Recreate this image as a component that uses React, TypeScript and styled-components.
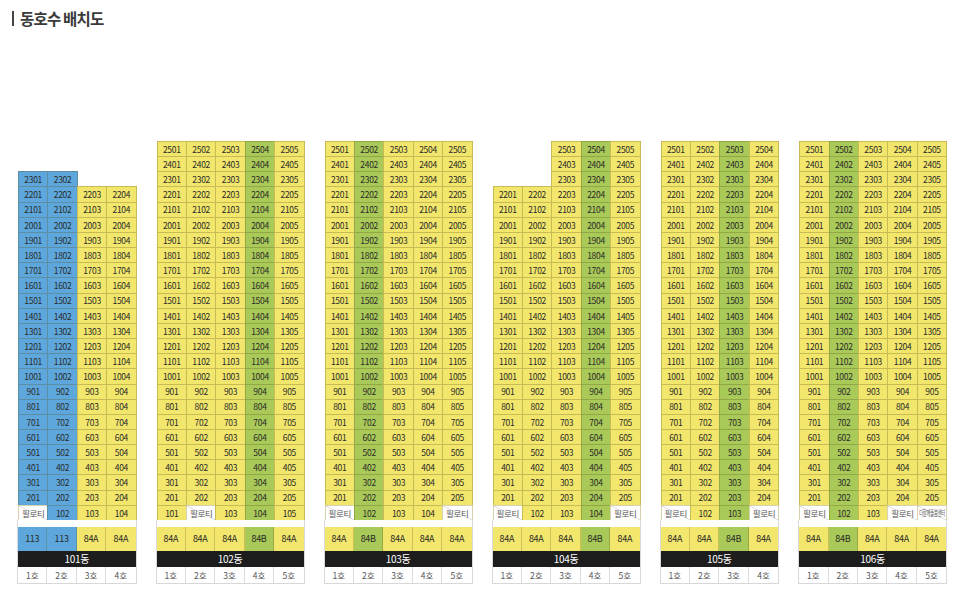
import styled, { createGlobalStyle } from "styled-components";

type Tone = "yellow" | "green" | "blue" | "white";

interface BuildingData {
  name: string;
  colTop: number[];
  tones: Tone[];
  ground: (string | null)[];
  types: string[];
}

const COL_W = 29.4;
const ROW_H = 15.16;

const TONE_BG: Record<Tone, string> = {
  yellow: "#f2e66c",
  green: "#a9c958",
  blue: "#5ea7dc",
  white: "#ffffff",
};

const BUILDINGS: BuildingData[] = [
  {
    name: "101동",
    colTop: [23, 23, 22, 22],
    tones: ["blue", "blue", "yellow", "yellow"],
    ground: ["필로티", null, null, null],
    types: ["113", "113", "84A", "84A"],
  },
  {
    name: "102동",
    colTop: [25, 25, 25, 25, 25],
    tones: ["yellow", "yellow", "yellow", "green", "yellow"],
    ground: [null, "필로티", null, null, null],
    types: ["84A", "84A", "84A", "84B", "84A"],
  },
  {
    name: "103동",
    colTop: [25, 25, 25, 25, 25],
    tones: ["yellow", "green", "yellow", "yellow", "yellow"],
    ground: ["필로티", null, null, null, "필로티"],
    types: ["84A", "84B", "84A", "84A", "84A"],
  },
  {
    name: "104동",
    colTop: [22, 22, 25, 25, 25],
    tones: ["yellow", "yellow", "yellow", "green", "yellow"],
    ground: ["필로티", null, null, null, "필로티"],
    types: ["84A", "84A", "84A", "84B", "84A"],
  },
  {
    name: "105동",
    colTop: [25, 25, 25, 25],
    tones: ["yellow", "yellow", "green", "yellow"],
    ground: ["필로티", null, null, "필로티"],
    types: ["84A", "84A", "84B", "84A"],
  },
  {
    name: "106동",
    colTop: [25, 25, 25, 25, 25],
    tones: ["yellow", "green", "yellow", "yellow", "yellow"],
    ground: ["필로티", null, null, "필로티", "다함께돌봄센터"],
    types: ["84A", "84B", "84A", "84A", "84A"],
  },
];

const GlobalStyle = createGlobalStyle`
  * { box-sizing: border-box; }
  body {
    margin: 0;
    background: #ffffff;
    font-family: "Noto Sans CJK KR", "Noto Sans", sans-serif;
    color: #333;
  }
`;

const Page = styled.div`
  width: 963px;
  height: 592px;
  padding: 8px 0 0 12px;
  overflow: hidden;
`;

const Title = styled.h2`
  display: flex;
  align-items: center;
  gap: 6px;
  margin: 0;
  height: 20px;
  font-size: 15.5px;
  font-weight: 700;
  letter-spacing: -0.8px;
  color: #3a3a3a;

  &::before {
    content: "";
    display: block;
    width: 2px;
    height: 15px;
    background: #444;
  }
`;

const BuildingsRow = styled.div`
  display: flex;
  align-items: flex-end;
  gap: 21px;
  margin-top: 113px;
  padding-left: 6px;
`;

const Building = styled.div<{ $cols: number }>`
  display: flex;
  flex-direction: column;
  width: ${({ $cols }) => $cols * COL_W}px;
`;

const FloorGrid = styled.div<{ $cols: number; $rows: number }>`
  display: grid;
  grid-template-columns: repeat(${({ $cols }) => $cols}, ${COL_W}px);
  grid-template-rows: repeat(${({ $rows }) => $rows}, ${ROW_H}px);
`;

const Cell = styled.div<{ $tone: Tone; $pilotis?: boolean }>`
  display: flex;
  align-items: center;
  justify-content: center;
  margin: 0 -1px -1px 0;
  border: 1px solid rgba(90, 80, 20, 0.28);
  background: ${({ $tone, $pilotis }) =>
    $pilotis
      ? `linear-gradient(to top right, transparent calc(50% - 0.6px), #cfcfcf 50%, transparent calc(50% + 0.6px)), #ffffff`
      : TONE_BG[$tone]};
  border-color: ${({ $pilotis }) =>
    $pilotis ? "#d6d2b0" : "rgba(90, 80, 20, 0.28)"};
  font-size: 8.5px;
  line-height: 1;
  letter-spacing: -0.3px;
  color: ${({ $pilotis }) => ($pilotis ? "#555" : "#2b2b2b")};
  white-space: nowrap;
  overflow: hidden;
`;

const Empty = styled.div``;

const Tiny = styled.span`
  display: inline-block;
  font-size: 7.5px;
  letter-spacing: -0.3px;
  transform: scaleX(0.56);
`;

const Footer = styled.div`
  display: flex;
  flex-direction: column;
  margin: 0 -1px;
  border: 1px solid #d8d8d8;
  border-top: none;
  background: #ffffff;
`;

const Spacer = styled.div`
  height: 7px;
`;

const FooterRow = styled.div<{ $cols: number }>`
  display: grid;
  grid-template-columns: repeat(${({ $cols }) => $cols}, 1fr);
`;

const TypeCell = styled.div<{ $tone: Tone }>`
  display: flex;
  align-items: center;
  justify-content: center;
  height: 24px;
  background: ${({ $tone }) => TONE_BG[$tone]};
  border-right: 1px solid rgba(90, 80, 20, 0.25);
  font-size: 9px;
  letter-spacing: -0.3px;
  color: #2b2b2b;

  &:last-child {
    border-right: none;
  }
`;

const NameBar = styled.div`
  display: flex;
  align-items: center;
  justify-content: center;
  height: 16px;
  background: #1d1d1d;
  color: #ffffff;
  font-size: 10px;
  letter-spacing: -0.3px;
`;

const LineCell = styled.div`
  display: flex;
  align-items: center;
  justify-content: center;
  height: 16px;
  border-right: 1px solid #dcdcdc;
  font-size: 8.5px;
  color: #555;

  &:last-child {
    border-right: none;
  }
`;

function BuildingBlock({ data }: { data: BuildingData }) {
  const cols = data.colTop.length;
  const top = Math.max(...data.colTop);
  const floors = Array.from({ length: top }, (_, i) => top - i);

  return (
    <Building $cols={cols}>
      <FloorGrid $cols={cols} $rows={top}>
        {floors.map((floor) =>
          data.colTop.map((colTop, c) => {
            const key = `${floor}-${c}`;
            if (floor > colTop) return <Empty key={key} />;
            const groundLabel = floor === 1 ? data.ground[c] : null;
            if (groundLabel) {
              return (
                <Cell key={key} $tone="white" $pilotis>
                  {groundLabel.length > 4 ? <Tiny>{groundLabel}</Tiny> : groundLabel}
                </Cell>
              );
            }
            return (
              <Cell key={key} $tone={data.tones[c]}>
                {floor * 100 + c + 1}
              </Cell>
            );
          })
        )}
      </FloorGrid>
      <Footer>
        <Spacer />
        <FooterRow $cols={cols}>
          {data.types.map((t, c) => (
            <TypeCell key={c} $tone={data.tones[c]}>
              {t}
            </TypeCell>
          ))}
        </FooterRow>
        <NameBar>{data.name}</NameBar>
        <FooterRow $cols={cols}>
          {data.colTop.map((_, c) => (
            <LineCell key={c}>{c + 1}호</LineCell>
          ))}
        </FooterRow>
      </Footer>
    </Building>
  );
}

export default function App() {
  return (
    <>
      <GlobalStyle />
      <Page>
        <Title>동호수 배치도</Title>
        <BuildingsRow>
          {BUILDINGS.map((b) => (
            <BuildingBlock key={b.name} data={b} />
          ))}
        </BuildingsRow>
      </Page>
    </>
  );
}
